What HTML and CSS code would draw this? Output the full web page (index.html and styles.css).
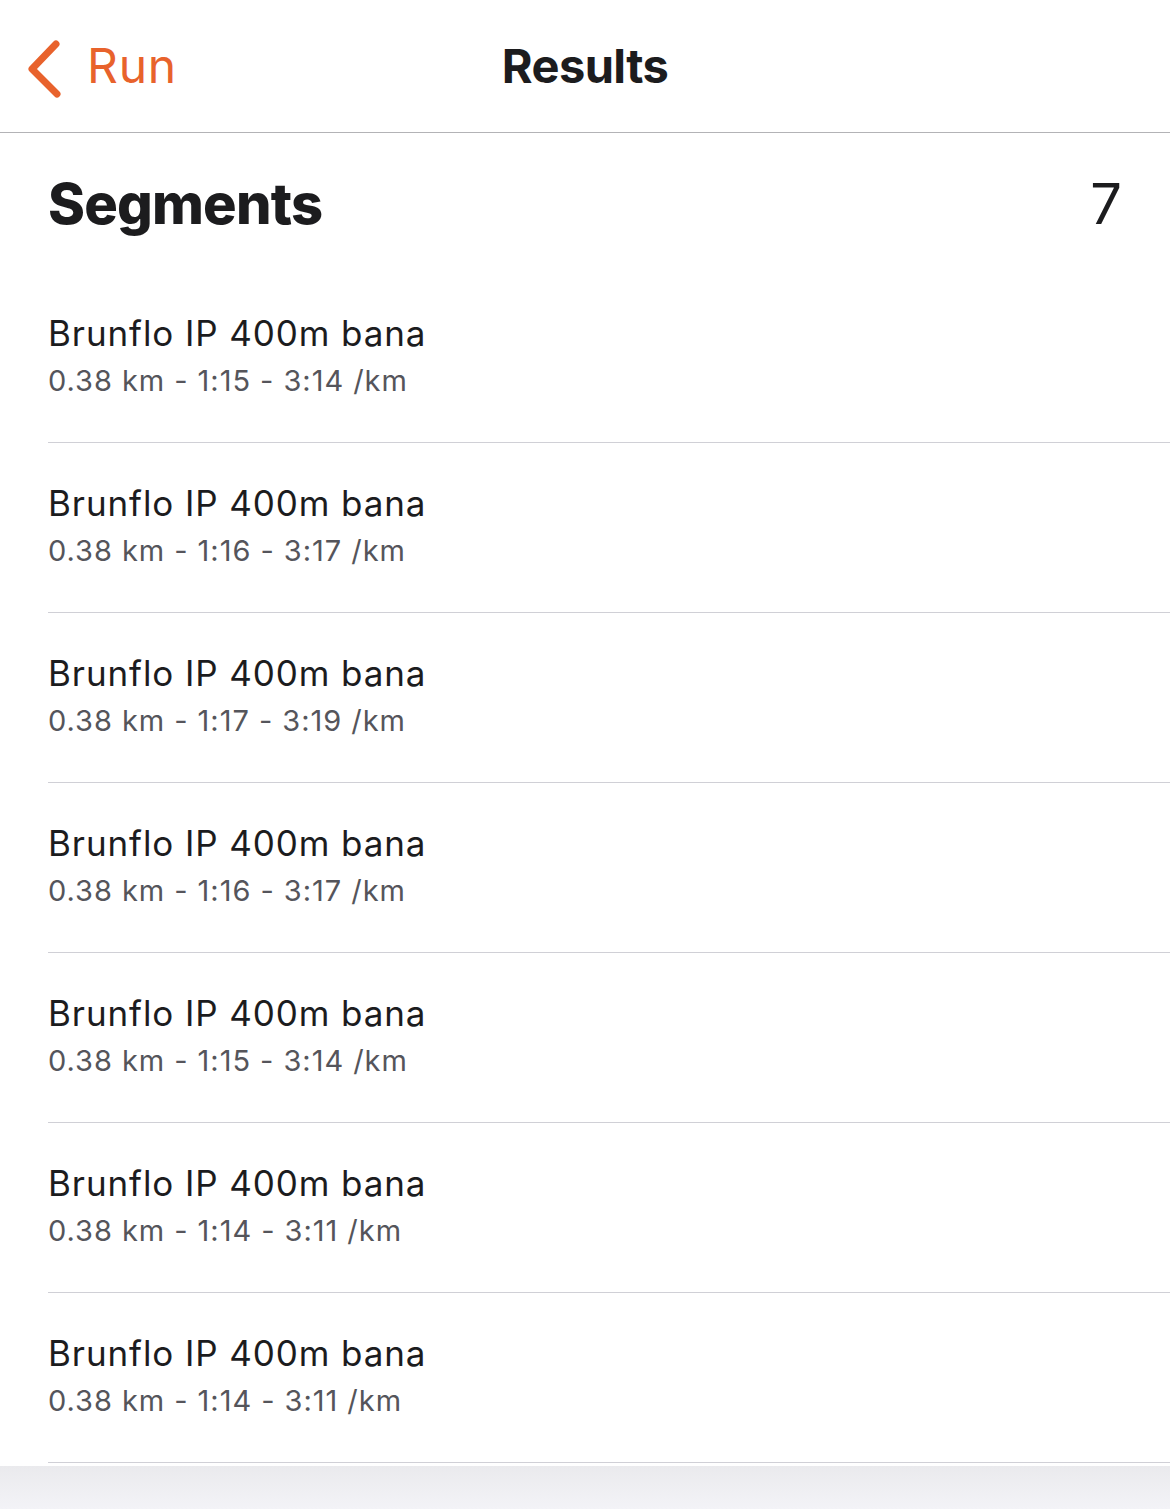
FILE: index.html
```html
<!DOCTYPE html>
<html lang="sv">
<head>
<meta charset="utf-8">
<title>Results</title>
<link rel="stylesheet" href="styles.css">
</head>
<body>
<div class="screen">
  <header class="nav">
    <a class="back" href="#">
      <svg class="chev" width="40" height="64" viewBox="0 0 40 64" aria-hidden="true">
        <polyline points="30,10 6,35 31,60" fill="none" stroke="#e8622c" stroke-width="7" stroke-linecap="round" stroke-linejoin="round"/>
      </svg>
      <span class="back-label">Run</span>
    </a>
    <h1 class="nav-title">Results</h1>
  </header>
  <main class="content">
    <div class="section-head">
      <h2 class="section-title">Segments</h2>
      <span class="section-count">7</span>
    </div>
    <ul class="list">
      <li class="row"><div class="row-title">Brunflo IP 400m bana</div><div class="row-sub">0.38 km - 1:15 - 3:14 /km</div></li>
      <li class="row"><div class="row-title">Brunflo IP 400m bana</div><div class="row-sub">0.38 km - 1:16 - 3:17 /km</div></li>
      <li class="row"><div class="row-title">Brunflo IP 400m bana</div><div class="row-sub">0.38 km - 1:17 - 3:19 /km</div></li>
      <li class="row"><div class="row-title">Brunflo IP 400m bana</div><div class="row-sub">0.38 km - 1:16 - 3:17 /km</div></li>
      <li class="row"><div class="row-title">Brunflo IP 400m bana</div><div class="row-sub">0.38 km - 1:15 - 3:14 /km</div></li>
      <li class="row"><div class="row-title">Brunflo IP 400m bana</div><div class="row-sub">0.38 km - 1:14 - 3:11 /km</div></li>
      <li class="row"><div class="row-title">Brunflo IP 400m bana</div><div class="row-sub">0.38 km - 1:14 - 3:11 /km</div></li>
    </ul>
  </main>
  <div class="footer-fill"></div>
</div>
</body>
</html>
```

FILE: styles.css
```css
* { box-sizing: border-box; }
html, body { margin: 0; padding: 0; }
body {
  font-family: Inter, "Noto Sans", "Liberation Sans", sans-serif;
  background: #f3f3f7;
  color: #1c1c1e;
}
.screen {
  width: 1170px;
  min-height: 1509px;
  display: flex;
  flex-direction: column;
  background: #ffffff;
}
.nav {
  position: relative;
  height: 133px;
  border-bottom: 1px solid #b3b3b6;
  display: flex;
  align-items: center;
  padding-left: 26px;
}
.back {
  display: flex;
  align-items: center;
  gap: 21px;
  text-decoration: none;
  color: #e8622c;
  padding-bottom: 2px;
}
.chev { display: block; margin-top: 2px; }
.back-label {
  font-size: 48px;
  font-weight: 400;
  letter-spacing: 0.8px;
}
.nav-title {
  position: absolute;
  left: 0; right: 0; top: 0; bottom: 0;
  margin: 0;
  display: flex;
  align-items: center;
  justify-content: center;
  font-size: 47px;
  font-weight: 700;
  letter-spacing: -0.6px;
  pointer-events: none;
  padding-bottom: 2px;
}
.content { background: #fff; padding-bottom: 3px; }
.section-head {
  height: 140px;
  display: flex;
  justify-content: space-between;
  align-items: flex-start;
  padding: 32px 48px 0 48px;
}
.section-title {
  margin: 0;
  font-size: 56px;
  font-weight: 800;
  letter-spacing: -0.8px;
  line-height: 78px;
}
.section-count {
  font-size: 56px;
  font-weight: 400;
  line-height: 78px;
  color: #1c1c1e;
}
.list {
  list-style: none;
  margin: 0;
  padding: 0 0 0 48px;
}
.row {
  height: 170px;
  border-bottom: 1px solid #d0d0d6;
  display: flex;
  flex-direction: column;
  justify-content: flex-start;
  padding-top: 37px;
}
.row-title {
  font-size: 35px;
  line-height: 46px;
  color: #1c1c1e;
  letter-spacing: 0.9px;
}
.row-sub {
  font-size: 29px;
  line-height: 40px;
  color: #55555b;
  margin-top: 5px;
  letter-spacing: 0.95px;
}
.footer-fill {
  flex: 1;
  background: linear-gradient(#eaeaed, #f3f3f7);
}
```
